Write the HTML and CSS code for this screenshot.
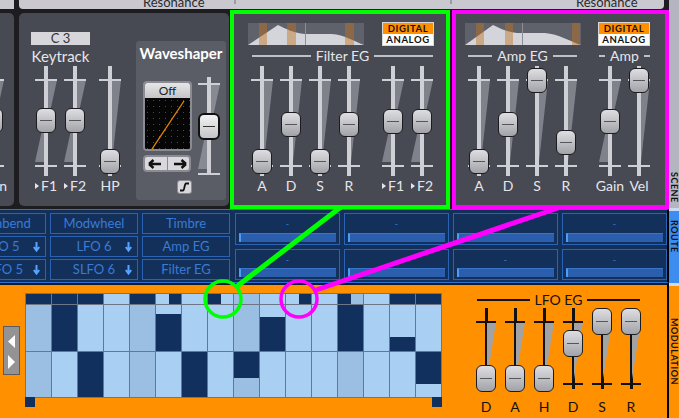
FILE: index.html
```html
<!DOCTYPE html>
<html>
<head>
<meta charset="utf-8">
<link rel="stylesheet" href="styles.css">
</head>
<body>
<div class="app">
  <div class="main">
    <div class="strip">
      <div class="sp sp0"></div>
      <div class="sp sp1">
        <div class="ss ss1"><span>Resonance</span></div>
        <div class="ss ss2"></div>
        <div class="ss ss3"><span>Resonance</span></div>
      </div>
    </div>

    <div class="scene">
      <div class="pnl part">
        <div class="sl off"><div class="trk"><i class="w1"></i><i class="w2"></i><b class="hd" style="top:42px"></b></div><span class="lb">Gain</span></div>
      </div>

      <div class="pnl kt">
        <div class="ktg">
          <div class="c3">C 3</div>
          <div class="kl">Keytrack</div>
          <div class="sls">
            <div class="sl"><div class="trk"><i class="w1"></i><i class="w2"></i><b class="hd" style="top:42px"></b></div><span class="lb"><i class="tri"></i>F1</span></div>
            <div class="sl"><div class="trk"><i class="w1"></i><i class="w2"></i><b class="hd" style="top:42px"></b></div><span class="lb"><i class="tri"></i>F2</span></div>
          </div>
        </div>
        <div class="sl hp"><div class="trk"><i class="w"></i><b class="hd" style="top:83px"></b></div><span class="lb">HP</span></div>
        <div class="ws">
          <div class="wst">Waveshaper</div>
          <div class="wsb">
            <div class="wsl">
              <div class="wsf">
                <div class="offb">Off</div>
                <svg class="wsd" width="45" height="51" viewBox="0 0 45 51">
                  <defs><pattern id="dots" width="6" height="6" patternUnits="userSpaceOnUse"><rect x="2" y="2" width="1" height="1" fill="#4c4c50"/></pattern></defs>
                  <rect width="45" height="51" fill="#060606"/>
                  <rect width="45" height="51" fill="url(#dots)"/>
                  <line x1="7" y1="51" x2="39" y2="3" stroke="#f08a00" stroke-width="1.3"/>
                </svg>
              </div>
              <div class="arr">
                <svg width="14" height="10" viewBox="0 0 14 10"><path d="M1 5 H13 M1 5 L5.5 1 M1 5 L5.5 9" stroke="#111" stroke-width="2.4" fill="none"/></svg>
                <i class="asep"></i>
                <svg width="14" height="10" viewBox="0 0 14 10"><path d="M13 5 H1 M13 5 L8.5 1 M13 5 L8.5 9" stroke="#111" stroke-width="2.4" fill="none"/></svg>
              </div>
              <div class="ico"><svg width="11" height="10" viewBox="0 0 11 10"><path d="M1 8.5 H4 C5.5 8.5 5.5 1.5 7 1.5 H10" stroke="#111" stroke-width="1.8" fill="none"/></svg></div>
            </div>
            <div class="sl"><div class="trk ws-t"><i class="w1"></i><i class="w2"></i><b class="hd big" style="top:36px"></b></div></div>
          </div>
        </div>
      </div>

      <div class="eg feg">
        <div class="egtop">
          <svg class="env" width="116" height="22" viewBox="0 0 116 22">
            <rect width="116" height="22" fill="#60626b"/>
            <path d="M0 22 L30 2 C38 6 46 10 57 11 L84 11 C96 12 106 18 116 22 Z" fill="#d4d5da"/>
            <line x1="57.5" y1="0" x2="57.5" y2="22" stroke="#8c8e96"/>
            <rect x="11" width="8" height="22" fill="#c0701e" opacity=".45"/>
            <rect x="39" width="9" height="22" fill="#c0701e" opacity=".45"/>
            <rect x="97" width="9" height="22" fill="#c0701e" opacity=".45"/>
          </svg>
          <div class="da"><span class="dg">DIGITAL</span><span class="an">ANALOG</span></div>
        </div>
        <div class="hdr fh">Filter EG</div>
        <div class="sls fs">
          <div class="sl"><div class="trk"><i class="w"></i><b class="hd" style="top:83px"></b></div><span class="lb">A</span></div>
          <div class="sl"><div class="trk"><i class="w"></i><b class="hd" style="top:46px"></b></div><span class="lb">D</span></div>
          <div class="sl"><div class="trk"><i class="w"></i><b class="hd" style="top:83px"></b></div><span class="lb">S</span></div>
          <div class="sl"><div class="trk"><i class="w"></i><b class="hd" style="top:46px"></b></div><span class="lb">R</span></div>
          <div class="sl gapl"><div class="trk"><i class="w1"></i><i class="w2"></i><b class="hd" style="top:43px"></b></div><span class="lb"><i class="tri"></i>F1</span></div>
          <div class="sl"><div class="trk"><i class="w1"></i><i class="w2"></i><b class="hd" style="top:43px"></b></div><span class="lb"><i class="tri"></i>F2</span></div>
        </div>
      </div>

      <div class="eg aeg">
        <div class="egtop">
          <svg class="env" width="116" height="22" viewBox="0 0 116 22">
            <rect width="116" height="22" fill="#60626b"/>
            <path d="M0 22 L28 2 C36 6 42 9 52 10 L80 10 C94 11 104 18 116 22 Z" fill="#d4d5da"/>
            <line x1="57.5" y1="0" x2="57.5" y2="22" stroke="#8c8e96"/>
            <rect x="11" width="8" height="22" fill="#c0701e" opacity=".45"/>
            <rect x="40" width="8" height="22" fill="#c0701e" opacity=".45"/>
            <rect x="107" width="8" height="22" fill="#c0701e" opacity=".45"/>
          </svg>
          <div class="da"><span class="dg">DIGITAL</span><span class="an">ANALOG</span></div>
        </div>
        <div class="grps">
          <div class="grp g1">
            <div class="hdr">Amp EG</div>
            <div class="sls">
              <div class="sl"><div class="trk"><i class="w"></i><b class="hd" style="top:83px"></b></div><span class="lb">A</span></div>
              <div class="sl"><div class="trk"><i class="w"></i><b class="hd" style="top:46px"></b></div><span class="lb">D</span></div>
              <div class="sl"><div class="trk"><i class="w"></i><b class="hd" style="top:2px"></b></div><span class="lb">S</span></div>
              <div class="sl"><div class="trk"><i class="w"></i><b class="hd" style="top:64px"></b></div><span class="lb">R</span></div>
            </div>
          </div>
          <div class="grp g2">
            <div class="hdr">Amp</div>
            <div class="sls">
              <div class="sl"><div class="trk"><i class="w1"></i><i class="w2"></i><b class="hd" style="top:43px"></b></div><span class="lb">Gain</span></div>
              <div class="sl"><div class="trk"><i class="w"></i><b class="hd" style="top:2px"></b></div><span class="lb">Vel</span></div>
            </div>
          </div>
        </div>
      </div>
    </div>

    <div class="route">
      <div class="rl">
        <div class="btn"><span>Pitchbend</span></div>
        <div class="btn"><span>Modwheel</span></div>
        <div class="btn"><span>Timbre</span></div>
        <div class="btn"><span>LFO 5</span><svg class="dn" width="7" height="10" viewBox="0 0 7 10"><path d="M3.5 0 V8 M0.8 5 L3.5 8.6 L6.2 5" stroke="#5aa2ff" stroke-width="2" fill="none"/></svg></div>
        <div class="btn"><span>LFO 6</span><svg class="dn" width="7" height="10" viewBox="0 0 7 10"><path d="M3.5 0 V8 M0.8 5 L3.5 8.6 L6.2 5" stroke="#5aa2ff" stroke-width="2" fill="none"/></svg></div>
        <div class="btn"><span>Amp EG</span></div>
        <div class="btn"><span>SLFO 5</span><svg class="dn" width="7" height="10" viewBox="0 0 7 10"><path d="M3.5 0 V8 M0.8 5 L3.5 8.6 L6.2 5" stroke="#5aa2ff" stroke-width="2" fill="none"/></svg></div>
        <div class="btn"><span>SLFO 6</span><svg class="dn" width="7" height="10" viewBox="0 0 7 10"><path d="M3.5 0 V8 M0.8 5 L3.5 8.6 L6.2 5" stroke="#5aa2ff" stroke-width="2" fill="none"/></svg></div>
        <div class="btn"><span>Filter EG</span></div>
      </div>
      <div class="rr">
        <div class="rbox"><span class="dash">-</span><i class="bar"></i></div>
        <div class="rbox"><span class="dash">-</span><i class="bar"></i></div>
        <div class="rbox"><span class="dash">-</span><i class="bar"></i></div>
        <div class="rbox"><span class="dash">-</span><i class="bar"></i></div>
        <div class="rbox"><span class="dash">-</span><i class="bar"></i></div>
        <div class="rbox"><span class="dash">-</span><i class="bar"></i></div>
        <div class="rbox"><span class="dash">-</span><i class="bar"></i></div>
        <div class="rbox"><span class="dash">-</span><i class="bar"></i></div>
      </div>
    </div>

    <div class="mod">
      <div class="arrows">
        <svg width="15" height="47" viewBox="0 0 15 47">
          <polygon points="11,8 4,14.5 11,21" fill="#fff"/>
          <polygon points="4,28 11,35 4,42" fill="#fff"/>
        </svg>
      </div>
      <div class="seqw">
        <div class="seq">
          <div class="col"><div class="t n"></div><div class="r m"></div><div class="r r2 m"></div></div>
          <div class="col"><div class="t n"></div><div class="r n"></div><div class="r r2 l"></div></div>
          <div class="col"><div class="t n"></div><div class="r l"></div><div class="r r2 n"></div></div>
          <div class="col"><div class="t l"></div><div class="r l"></div><div class="r r2 l"></div></div>
          <div class="col"><div class="t n"></div><div class="r m"></div><div class="r r2 m"></div></div>
          <div class="col"><div class="t"><i class="l"></i><i class="n"></i></div><div class="r"><i class="l" style="height:9px"></i><i class="n"></i></div><div class="r r2 l"></div></div>
          <div class="col"><div class="t l"></div><div class="r l"></div><div class="r r2 n"></div></div>
          <div class="col"><div class="t"><i class="n"></i><i class="l"></i></div><div class="r l"></div><div class="r r2 l"></div></div>
          <div class="col"><div class="t m"></div><div class="r m"></div><div class="r r2"><i class="n" style="height:26px"></i><i class="m"></i></div></div>
          <div class="col"><div class="t l"></div><div class="r"><i class="l" style="height:12px"></i><i class="n"></i></div><div class="r r2 l"></div></div>
          <div class="col"><div class="t"><i class="l"></i><i class="n"></i></div><div class="r l"></div><div class="r r2 l"></div></div>
          <div class="col"><div class="t l"></div><div class="r l"></div><div class="r r2 l"></div></div>
          <div class="col"><div class="t"><i class="n"></i><i class="m"></i></div><div class="r n"></div><div class="r r2 m"></div></div>
          <div class="col"><div class="t l"></div><div class="r l"></div><div class="r r2 l"></div></div>
          <div class="col"><div class="t n"></div><div class="r"><i class="l" style="height:32px"></i><i class="n"></i></div><div class="r r2 l"></div></div>
          <div class="col"><div class="t n"></div><div class="r l"></div><div class="r r2"><i class="n" style="height:32px"></i><i class="l"></i></div></div>
        </div>
        <div class="marks"><i></i><i></i></div>
      </div>
      <div class="lfo">
        <div class="hdr">LFO EG</div>
        <div class="sls">
          <div class="sl"><div class="trk lt"><i class="w"></i><b class="hd tall" style="top:57px"></b></div><span class="lb">D</span></div>
          <div class="sl"><div class="trk lt"><i class="w"></i><b class="hd tall" style="top:57px"></b></div><span class="lb">A</span></div>
          <div class="sl"><div class="trk lt"><i class="w"></i><b class="hd tall" style="top:57px"></b></div><span class="lb">H</span></div>
          <div class="sl"><div class="trk lt"><i class="w"></i><b class="hd tall" style="top:22px"></b></div><span class="lb">D</span></div>
          <div class="sl"><div class="trk lt"><i class="w"></i><b class="hd tall" style="top:0px"></b></div><span class="lb">S</span></div>
          <div class="sl"><div class="trk lt"><i class="w"></i><b class="hd tall" style="top:0px"></b></div><span class="lb">R</span></div>
        </div>
      </div>
    </div>
  </div>

  <div class="tabs">
    <div class="tab t1"><span>SCENE</span></div>
    <div class="tab t2"><span>ROUTE</span></div>
    <div class="tab t3"><span>MODULATION</span></div>
  </div>
</div>

<svg class="notes" width="679" height="418" viewBox="0 0 679 418">
  <line x1="341" y1="207" x2="236" y2="287" stroke="#00ff00" stroke-width="5"/>
  <circle cx="223" cy="299" r="18" fill="none" stroke="#00ff00" stroke-width="3.5"/>
  <line x1="558" y1="208" x2="316" y2="290" stroke="#ff00ff" stroke-width="5"/>
  <circle cx="299" cy="299" r="18" fill="none" stroke="#ff00ff" stroke-width="3.5"/>
</svg>
</body>
</html>
```

FILE: styles.css
```css
* { box-sizing: border-box; }
html, body { margin: 0; padding: 0; }
body {
  width: 679px; height: 418px; overflow: hidden; position: relative;
  background: #1c1c21;
  font-family: Lato, "Open Sans", "Liberation Sans", sans-serif;
}
i, b { display: block; font-style: normal; }

.app { display: flex; width: 679px; height: 418px; }
.main { width: 669px; display: flex; flex-direction: column; }

/* top strip */
.strip { height: 9px; margin-bottom: 1px; display: flex; gap: 5px; }
.sp { height: 9px; background: #c9c9cf; overflow: hidden; }
.sp0 { width: 14px; }
.sp1 { width: 645px; display: flex; border-radius: 0 0 4px 4px; }
.ss { display: flex; align-items: flex-end; }
.ss span { font-size: 13px; line-height: 14px; color: #2a2a30; white-space: nowrap; }
.ss1 { width: 215px; padding-left: 124px; }
.ss2 { width: 216px; }
.ss3 { width: 214px; padding-left: 126px; }
.ss2, .ss3 { background: linear-gradient(#9c9ca6, #9c9ca6) no-repeat 0 0 / 2px 4px; }

/* scene */
.scene { height: 199px; display: flex; align-items: flex-start; }
.pnl { background: #474953; margin-top: 3px; height: 193px; border-radius: 5px; }
.part { width: 14px; overflow: hidden; border-radius: 0 5px 5px 0; padding-top: 53px; }
.sl.off { margin-left: -19px; }

.kt { width: 210px; margin-left: 5px; padding: 19px 3px 0 12px; display: flex; align-items: flex-start; }
.ktg { width: 59px; display: flex; flex-direction: column; align-items: center; }
.c3 { width: 59px; height: 13px; background: #d7d7db; color: #333; font-size: 13px; line-height: 13px; text-align: center; }
.kl { margin-top: 3px; font-size: 15px; line-height: 16px; color: #e6e6ea; white-space: nowrap; }
.ktg .sls { margin-top: 2px; }
.hp { margin: 34px 0 0 8px; }

.ws { margin: 9px 0 0 14px; width: 90px; height: 159px; background: #5a5c66; border-radius: 3px; }
.wst { margin-top: 3px; font-size: 15px; font-weight: 700; line-height: 18px; color: #fff; text-align: center; }
.wsb { display: flex; margin-top: 15px; padding-left: 7px; gap: 5px; }
.wsl { margin-top: 4px; width: 49px; display: flex; flex-direction: column; }
.wsf { border: 2px solid #8b8c93; border-radius: 4px; overflow: hidden; background: #060606; }
.offb { height: 15px; background: linear-gradient(#e6e6e8, #c4c4c8); color: #222; font-size: 12px; line-height: 15px; text-align: center; }
.wsd { display: block; }
.arr { margin-top: 4px; height: 17px; width: 48px; border: 2px solid #8b8c93; border-radius: 4px; background: #d9d9dd; display: flex; align-items: center; justify-content: space-around; }
.asep { width: 1px; height: 13px; background: #8b8c93; }
.ico { margin-top: 8px; align-self: flex-end; width: 15px; height: 14px; border: 1px solid #8b8c93; border-radius: 3px; background: #d9d9dd; display: flex; align-items: center; justify-content: center; }

/* sliders */
.sls { display: flex; gap: 5px; }
.sl { width: 24px; flex: none; display: flex; flex-direction: column; align-items: center; }
.trk { position: relative; width: 24px; height: 110px; }
.trk::before { content: ""; position: absolute; left: 10px; width: 4px; top: 0; bottom: 0; background: #cfd0d6; }
.trk::after { content: ""; position: absolute; left: 1px; right: 1px; top: 13px; height: 84px; border-top: 2px solid #cfd0d6; border-bottom: 2px solid #cfd0d6; }
.w, .w1, .w2 { position: absolute; background: rgba(165, 167, 177, 0.6); }
.w { left: 14px; width: 9px; top: 14px; height: 82px; clip-path: polygon(0 0, 100% 0, 0 100%); }
.w1 { left: 14px; width: 9px; top: 14px; height: 41px; clip-path: polygon(0 0, 100% 0, 0 100%); }
.w2 { left: 1px; width: 9px; top: 55px; height: 41px; clip-path: polygon(100% 0, 100% 100%, 0 100%); }
.hd {
  position: absolute; left: 2px; width: 20px; height: 25px; z-index: 2;
  border: 1.5px solid #1c1c20; border-radius: 6px;
  background: linear-gradient(#dedee2, #a2a3a8);
}
.hd::after { content: ""; position: absolute; left: 3px; right: 3px; top: 10.5px; height: 1px; background: #55565c; }
.lb { margin-top: 2px; font-size: 14px; line-height: 16px; color: #e6e6ea; white-space: nowrap; display: flex; align-items: center; }
.tri { width: 0; height: 0; border-left: 4px solid #e6e6ea; border-top: 3.5px solid transparent; border-bottom: 3.5px solid transparent; margin-right: 2px; }

.ws-t { height: 98px; }
.ws-t::after { top: 6px; height: 88px; }
.ws-t .w1 { top: 7px; height: 42px; }
.ws-t .w2 { top: 49px; height: 43px; }
.hd.big { left: 1px; width: 22px; height: 27px; border: 2px solid #111; background: linear-gradient(#f2f2f4, #c6c6ca); }
.hd.big::after { top: 11px; background: #333; }

/* EG boxes */
.eg { height: 199px; border: 4px solid; background: #474953; display: flex; flex-direction: column; }
.feg { width: 220px; margin-left: 1px; border-color: #00ff00; padding: 9px 13px 0 14px; }
.aeg { width: 217px; margin-left: 2px; border-color: #ff00ff; padding: 9px 16px 0 9px; }
.egtop { display: flex; justify-content: space-between; align-items: flex-start; }
.env { display: block; }
.da { width: 50px; height: 22px; box-shadow: 0 0 0 1px #d8d8d8; background: #fff; display: flex; flex-direction: column; overflow: hidden; }
.da span { height: 11px; font-size: 9.5px; font-weight: 700; line-height: 11px; letter-spacing: 0.6px; color: #111; text-align: center; }
.dg { background: #ff9000; }

.hdr { display: flex; align-items: center; gap: 5px; font-size: 14px; line-height: 14px; color: #e6e6ea; white-space: nowrap; }
.hdr::before, .hdr::after { content: ""; flex: 1; height: 2px; background: #bfc0c6; }
.fh { margin: 4px 0 0 4px; }
.fs { margin: 3px 0 0 2px; }
.gapl { margin-left: 15px; }
.grps { display: flex; }
.grp { display: flex; flex-direction: column; }
.grp .hdr { margin: 4px 1px 0; }
.grp .sls { margin-top: 3px; }
.g1 { margin-left: 2px; }
.g2 { margin-left: 20px; }

/* route */
.route {
  height: 74px; border-top: 1px solid #2e6fd2; border-bottom: 1px solid #2e6fd2; border-right: 2px solid #000;
  background: #13305b; padding-top: 3px; display: flex; overflow: hidden;
}
.rl { display: grid; grid-template-columns: repeat(3, 88px); grid-template-rows: repeat(3, 21px); gap: 2px 4px; margin-left: -42px; flex: none; }
.btn { border: 1px solid #2a62b4; display: grid; grid-template-columns: 1fr auto 1fr; align-items: center; font-size: 13px; line-height: 19px; color: #3b7bd3; white-space: nowrap; }
.btn span { grid-column: 2; }
.btn .dn { grid-column: 3; justify-self: end; margin-right: 5px; display: block; }
.rr { margin-left: 5px; flex: 1; height: 67px; display: grid; grid-template-columns: repeat(4, 1fr); grid-template-rows: repeat(2, 1fr); gap: 4px; }
.rbox { border: 1px solid #2a62b4; display: flex; flex-direction: column; justify-content: space-between; padding: 2px 3px; }
.dash { text-align: center; font-size: 9px; line-height: 10px; color: #3b7bd3; margin-top: 3px; }
.bar { height: 9px; background: #2b5fae; border-left: 2px solid #4d9cf6; border-top: 1px solid #3a74c8; }

/* modulation */
.mod { flex: 1; background: #ff9000; border-top: 2px solid #0d1a33; border-right: 2px solid #000; display: flex; align-items: flex-start; }
.arrows { margin: 41px 0 0 3px; width: 17px; height: 49px; border: 1px solid #5c5c5c; background: #939393; display: flex; align-items: center; justify-content: center; }
.arrows svg { display: block; }
.seqw { margin: 8px 0 0 5px; display: flex; flex-direction: column; }
.seq { display: flex; gap: 1px; padding: 1px; background: #6e7584; }
.col { width: 25px; display: flex; flex-direction: column; gap: 1px; }
.t { height: 10px; display: flex; }
.t > i { flex: 1; }
.r { height: 46px; display: flex; flex-direction: column; }
.r2 { height: 45px; }
.r > i { flex: none; }
.r > i:last-child { flex: 1; }
.n { background: #12305e; }
.l { background: #a9d0f2; }
.m { background: #9abfe2; }
.marks { display: flex; justify-content: space-between; margin-top: -1px; }
.marks i { width: 10px; height: 10px; background: #12305e; }

.lfo { margin: 8px 0 0 35px; width: 163px; display: flex; flex-direction: column; }
.lfo .hdr { color: #111; }
.lfo .hdr::before, .lfo .hdr::after { background: #111; }
.lfo .sls { margin: 1px -3px 0; }
.trk.lt { height: 81px; }
.trk.lt::before { left: 10.5px; width: 3px; background: #111; }
.trk.lt::after { left: 2px; right: 2px; top: 13px; height: 60px; border-color: #111; }
.trk.lt .w { top: 14px; height: 57px; background: #a3a3a3; left: 13px; }
.hd.tall { height: 27px; }
.hd.tall::after { top: 11.5px; }
.lfo .lb { color: #111; margin-top: 10px; }

/* tabs */
.tabs { width: 10px; display: flex; flex-direction: column; background: #c9dcf5; }
.tab { display: flex; flex-direction: column; align-items: center; }
.tab span { writing-mode: vertical-rl; font-size: 9px; font-weight: 700; line-height: 10px; letter-spacing: 0.5px; color: #111; }
.t1 { height: 208px; background: #b5b5c2; justify-content: flex-end; padding-bottom: 5px; }
.t2 { height: 72px; margin-top: 3px; background: #3d8cf0; padding-top: 9px; }
.t3 { flex: 1; margin-top: 3px; background: #ff9000; padding-top: 32px; }

.notes { position: absolute; left: 0; top: 0; pointer-events: none; }
```
